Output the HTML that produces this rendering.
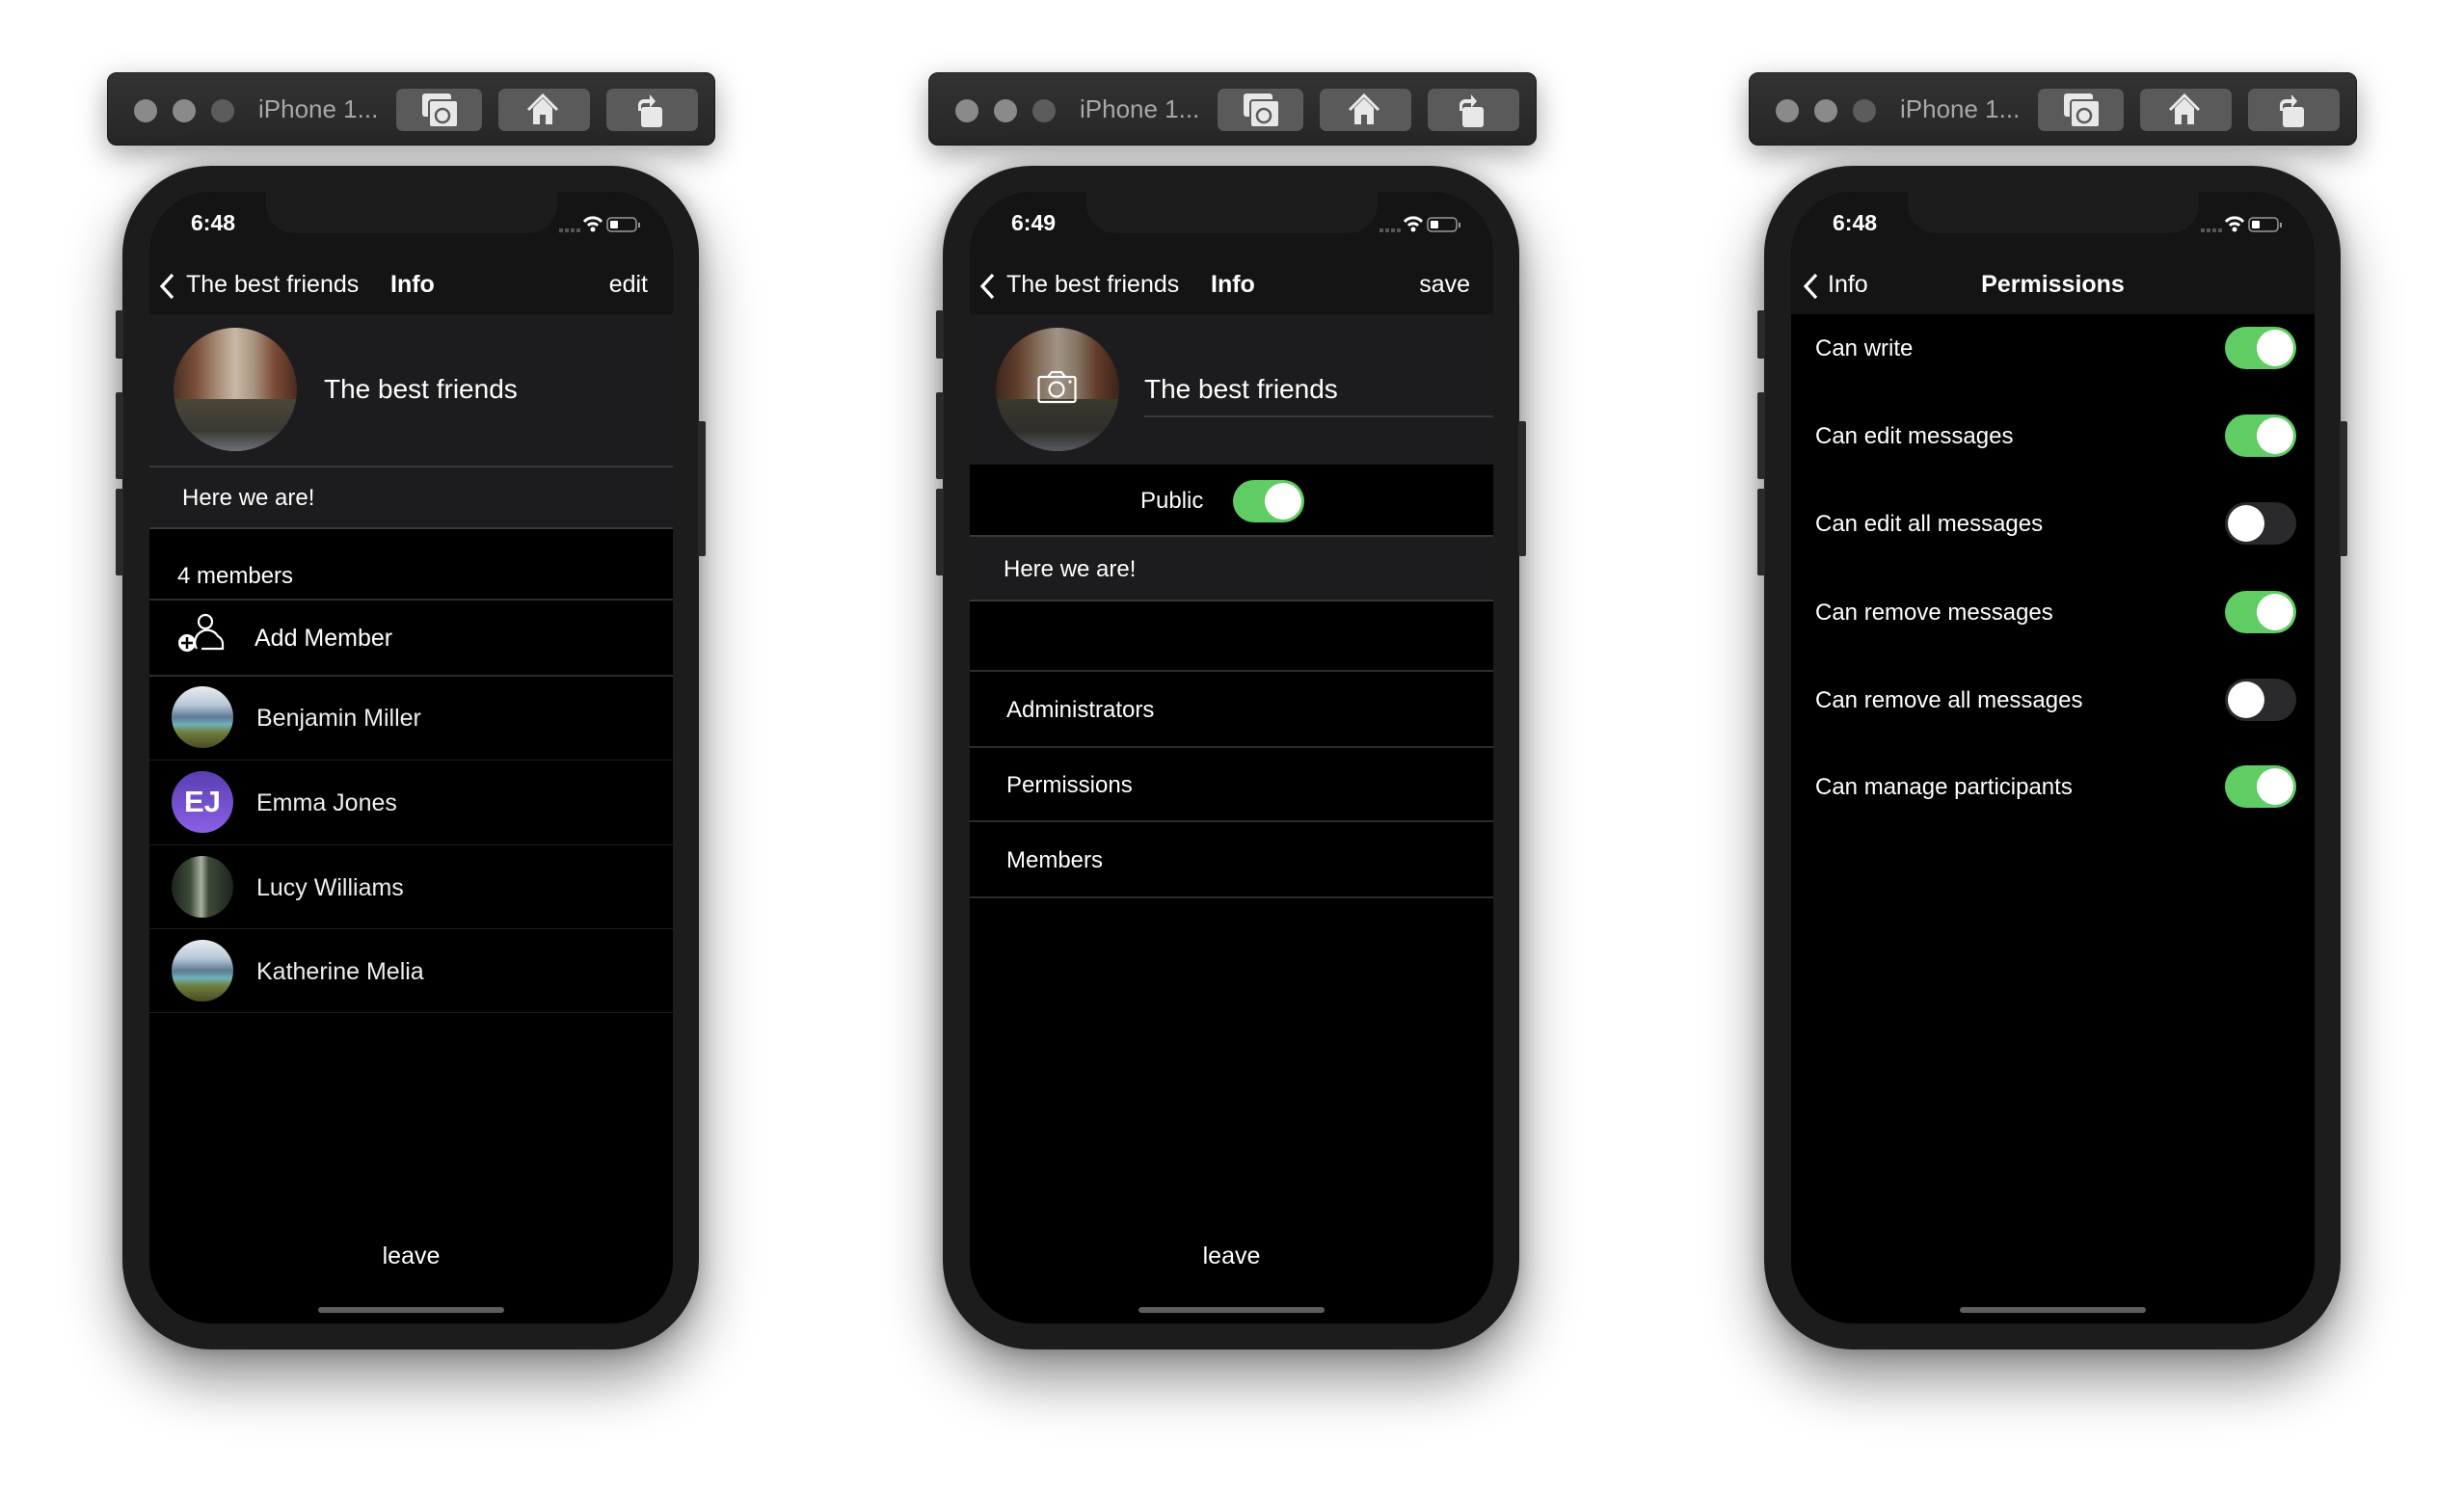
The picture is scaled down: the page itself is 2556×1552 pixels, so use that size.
<!DOCTYPE html>
<html><head><meta charset="utf-8">
<style>
*{margin:0;padding:0;box-sizing:border-box}
body{width:2556px;height:1552px;background:#fff;position:relative;overflow:hidden;font-family:"Liberation Sans",sans-serif;color:#fff}
.a{position:absolute}
.tb{position:absolute;top:75px;width:631px;height:76px;border-radius:10px;background:linear-gradient(#333,#262626);box-shadow:0 10px 30px rgba(0,0,0,.35);border:1px solid #1a1a1a}
.dot{position:absolute;top:27px;width:24px;height:24px;border-radius:50%}
.tbt{position:absolute;left:156px;top:22px;font-size:26px;color:#a8a8a8}
.btn{position:absolute;top:16px;height:44px;border-radius:7px;background:#5a5a5a}
.phone{position:absolute;top:172px;width:598px;height:1228px;border-radius:92px;background:#1c1c1c;box-shadow:0 30px 60px rgba(0,0,0,.45),0 0 20px rgba(0,0,0,.25)}
.side{position:absolute;background:#2a2a2a;width:8px;border-radius:2px}
.scr{position:absolute;left:28px;top:27px;width:543px;height:1174px;border-radius:64px;background:#000;overflow:hidden}
.nav{position:absolute;left:0;top:0;width:543px;height:127px;background:#141414}
.notch{position:absolute;left:121px;top:0;width:302px;height:43px;background:#1c1c1c;border-radius:0 0 30px 30px}
.time{position:absolute;left:43px;top:19px;font-size:23px;font-weight:bold}
.t{position:absolute;white-space:nowrap;line-height:1}
.sep{position:absolute;left:0;width:543px;height:2px;background:#2c2c2e}
.hi{position:absolute;left:175px;top:1157px;width:193px;height:6px;border-radius:3px;background:#5e5e5e}
.tg{position:absolute;width:74px;height:44px;border-radius:22px}
.tg.on{background:#5fcc64}
.tg.off{background:#2a2a2c}
.tg i{position:absolute;top:3px;width:38px;height:38px;border-radius:50%;background:#fff}
.tg.on i{right:3px}.tg.off i{left:3px}
.venice{background:linear-gradient(90deg,#4a3024 0,#7a4e38 18%,#a88a74 35%,#c9b8a6 50%,#a89480 65%,#7a4a34 82%,#4a2c20 100%);}
.venice:after{content:"";position:absolute;left:0;right:0;bottom:0;height:42%;background:linear-gradient(#4a4638,#3a3a34 60%,#6c7078)}
.land{background:linear-gradient(#e9ecef 0,#b8c8d8 30%,#5d7a94 50%,#6fb0b8 62%,#6f7d3c 75%,#4b4a22 100%)}
.forest{background:linear-gradient(90deg,#1e261e,#3c4a38 30%,#a8b0a0 48%,#3c4a38 60%,#1c241c)}
.av{position:absolute;width:64px;height:64px;border-radius:50%;overflow:hidden}
</style></head><body>

<div class="tb" style="left:111px">
<div class="dot" style="left:27px;background:#8a8a8a"></div><div class="dot" style="left:67px;background:#8a8a8a"></div><div class="dot" style="left:107px;background:#5c5c5c"></div>
<div class="tbt">iPhone 1...</div>
<div class="btn" style="left:299px;width:89px"></div><div class="btn" style="left:405px;width:95px"></div><div class="btn" style="left:517px;width:95px"></div>
</div>
<div class="tb" style="left:963px">
<div class="dot" style="left:27px;background:#8a8a8a"></div><div class="dot" style="left:67px;background:#8a8a8a"></div><div class="dot" style="left:107px;background:#5c5c5c"></div>
<div class="tbt">iPhone 1...</div>
<div class="btn" style="left:299px;width:89px"></div><div class="btn" style="left:405px;width:95px"></div><div class="btn" style="left:517px;width:95px"></div>
</div>
<div class="tb" style="left:1814px">
<div class="dot" style="left:27px;background:#8a8a8a"></div><div class="dot" style="left:67px;background:#8a8a8a"></div><div class="dot" style="left:107px;background:#5c5c5c"></div>
<div class="tbt">iPhone 1...</div>
<div class="btn" style="left:299px;width:89px"></div><div class="btn" style="left:405px;width:95px"></div><div class="btn" style="left:517px;width:95px"></div>
</div>
<svg class="a" style="left:0;top:0" width="2556" height="200">
<g id="ic" fill="#e8e8e8">
<rect x="438" y="97" width="30" height="24" rx="3"/><rect x="445" y="104" width="30" height="28" rx="3" stroke="#5a5a5a" stroke-width="2"/><circle cx="459" cy="120" r="7" fill="none" stroke="#5a5a5a" stroke-width="2.5"/>
<path d="M548 114 L563 99 L578 114" fill="none" stroke="#e8e8e8" stroke-width="3"/><path d="M553 112 L563 102 L573 112 V129 H553Z"/><rect x="560" y="119" width="6" height="10" fill="#5a5a5a"/>
<path d="M662 115 v-6 a6 6 0 0 1 6 -6 h6 v-5 l6 7 -6 7 v-5 h-6 a3 3 0 0 0 -3 3 v5z"/><rect x="665" y="111" width="22" height="21" rx="3"/>
</g>
<use href="#ic" x="852"/><use href="#ic" x="1703"/>
</svg>

<div class="phone" style="left:127px">
<div class="side" style="left:-7px;top:150px;height:50px"></div><div class="side" style="left:-7px;top:235px;height:90px"></div><div class="side" style="left:-7px;top:335px;height:90px"></div><div class="side" style="left:597px;top:265px;height:140px"></div>
<div class="scr">
<div class="nav"></div><div class="notch"></div>
<div class="time">6:48</div>
<svg class="a" style="left:420px;top:24px" width="100" height="20"><g fill="#555"><rect x="5" y="14" width="4" height="4"/><rect x="11" y="14" width="4" height="4"/><rect x="17" y="14" width="4" height="4"/><rect x="23" y="14" width="4" height="4"/></g><path d="M31 7 a12 12 0 0 1 18 0" stroke="#fff" stroke-width="3" fill="none"/><path d="M35 11 a7 7 0 0 1 10 0" stroke="#fff" stroke-width="3" fill="none"/><circle cx="40" cy="15" r="2.5" fill="#fff"/><rect x="55" y="3" width="30" height="14" rx="4" fill="none" stroke="#999" stroke-width="1.5"/><rect x="58" y="6" width="8" height="8" rx="1" fill="#fff"/><rect x="87" y="8" width="2" height="5" fill="#999"/></svg>
<svg class="a" style="left:9px;top:84px" width="20" height="28"><path d="M15 2 L4 14 L15 26" stroke="#fff" stroke-width="3.2" fill="none"/></svg>
<div class="t" style="left:38px;top:84px;font-size:25px">The best friends</div>
<div class="t" style="left:250px;top:84px;font-size:25px;font-weight:bold">Info</div>
<div class="t" style="right:26px;top:84px;font-size:25px">edit</div>
<div class="a" style="left:0;top:127px;width:543px;height:157px;background:#1c1c1e"></div>
<div class="a venice" style="left:25px;top:141px;width:128px;height:128px;border-radius:50%;overflow:hidden"></div>
<div class="t" style="left:181px;top:191px;font-size:28px">The best friends</div>
<div class="sep" style="top:284px;background:#38383a"></div>
<div class="a" style="left:0;top:286px;width:543px;height:63px;background:#1c1c1e"></div>
<div class="t" style="left:34px;top:306px;font-size:24px">Here we are!</div>
<div class="sep" style="top:348px;background:#38383a"></div>
<div class="t" style="left:29px;top:387px;font-size:24px">4 members</div>
<div class="sep" style="top:422px"></div>
<svg class="a" style="left:29px;top:436px" width="50" height="50"><circle cx="29" cy="10" r="7" fill="none" stroke="#fff" stroke-width="2.2"/><path d="M20 38 a12 12 0 0 1 22 -13 a9 9 0 0 1 5 8 v5 h-22" fill="none" stroke="#fff" stroke-width="2.2"/><circle cx="10" cy="32" r="9" fill="#fff"/><path d="M10 26 v12 M4 32 h12" stroke="#000" stroke-width="2.5"/></svg>
<div class="t" style="left:109px;top:451px;font-size:25px">Add Member</div>
<div class="sep" style="top:501px"></div>
<div class="av land" style="left:23px;top:513px"></div><div class="t" style="left:111px;top:534px;font-size:25px;color:#eee">Benjamin Miller</div>
<div class="sep" style="top:589px;height:1px;background:#1c1c1c"></div>
<div class="av" style="left:23px;top:601px;background:linear-gradient(#5a3fb0,#8a5fe6);font-weight:bold;font-size:31px;text-align:center;line-height:64px">EJ</div><div class="t" style="left:111px;top:622px;font-size:25px;color:#eee">Emma Jones</div>
<div class="sep" style="top:677px;height:1px;background:#1c1c1c"></div>
<div class="av forest" style="left:23px;top:689px"></div><div class="t" style="left:111px;top:710px;font-size:25px;color:#eee">Lucy Williams</div>
<div class="sep" style="top:764px;height:1px;background:#1c1c1c"></div>
<div class="av land" style="left:23px;top:776px"></div><div class="t" style="left:111px;top:797px;font-size:25px;color:#eee">Katherine Melia</div>
<div class="sep" style="top:851px;height:1px;background:#1c1c1c"></div>
<div class="t" style="left:0;width:543px;text-align:center;top:1092px;font-size:25px">leave</div>
<div class="hi"></div>
</div></div>

<div class="phone" style="left:978px">
<div class="side" style="left:-7px;top:150px;height:50px"></div><div class="side" style="left:-7px;top:235px;height:90px"></div><div class="side" style="left:-7px;top:335px;height:90px"></div><div class="side" style="left:597px;top:265px;height:140px"></div>
<div class="scr">
<div class="nav"></div><div class="notch"></div>
<div class="time">6:49</div>
<svg class="a" style="left:420px;top:24px" width="100" height="20"><g fill="#555"><rect x="5" y="14" width="4" height="4"/><rect x="11" y="14" width="4" height="4"/><rect x="17" y="14" width="4" height="4"/><rect x="23" y="14" width="4" height="4"/></g><path d="M31 7 a12 12 0 0 1 18 0" stroke="#fff" stroke-width="3" fill="none"/><path d="M35 11 a7 7 0 0 1 10 0" stroke="#fff" stroke-width="3" fill="none"/><circle cx="40" cy="15" r="2.5" fill="#fff"/><rect x="55" y="3" width="30" height="14" rx="4" fill="none" stroke="#999" stroke-width="1.5"/><rect x="58" y="6" width="8" height="8" rx="1" fill="#fff"/><rect x="87" y="8" width="2" height="5" fill="#999"/></svg>
<svg class="a" style="left:9px;top:84px" width="20" height="28"><path d="M15 2 L4 14 L15 26" stroke="#fff" stroke-width="3.2" fill="none"/></svg>
<div class="t" style="left:38px;top:84px;font-size:25px">The best friends</div>
<div class="t" style="left:250px;top:84px;font-size:25px;font-weight:bold">Info</div>
<div class="t" style="right:24px;top:84px;font-size:25px">save</div>
<div class="a" style="left:0;top:127px;width:543px;height:156px;background:#1c1c1e"></div>
<div class="a venice" style="left:27px;top:141px;width:128px;height:128px;border-radius:50%;overflow:hidden;filter:brightness(.8)"></div>
<svg class="a" style="left:70px;top:186px" width="42" height="34"><rect x="1.5" y="6" width="38" height="26" rx="2" fill="none" stroke="#fff" stroke-width="2.2"/><path d="M11 6 l4 -5 h10 l4 5" fill="none" stroke="#fff" stroke-width="2.2"/><circle cx="20" cy="19" r="7.5" fill="none" stroke="#fff" stroke-width="2.2"/><circle cx="34" cy="11" r="1.6" fill="#fff"/></svg>
<div class="t" style="left:181px;top:191px;font-size:28px">The best friends</div>
<div class="a" style="left:181px;top:232px;width:362px;height:2px;background:#3a3a3c"></div>
<div class="t" style="left:177px;top:309px;font-size:24px">Public</div>
<div class="tg on" style="left:273px;top:299px"><i></i></div>
<div class="sep" style="top:356px;background:#38383a"></div>
<div class="a" style="left:0;top:358px;width:543px;height:66px;background:#1c1c1e"></div>
<div class="t" style="left:35px;top:380px;font-size:24px">Here we are!</div>
<div class="sep" style="top:423px;background:#38383a"></div>
<div class="sep" style="top:496px"></div>
<div class="t" style="left:38px;top:526px;font-size:24px">Administrators</div>
<div class="sep" style="top:575px"></div>
<div class="t" style="left:38px;top:604px;font-size:24px">Permissions</div>
<div class="sep" style="top:652px"></div>
<div class="t" style="left:38px;top:682px;font-size:24px">Members</div>
<div class="sep" style="top:731px"></div>
<div class="t" style="left:0;width:543px;text-align:center;top:1092px;font-size:25px">leave</div>
<div class="hi"></div>
</div></div>

<div class="phone" style="left:1830px">
<div class="side" style="left:-7px;top:150px;height:50px"></div><div class="side" style="left:-7px;top:235px;height:90px"></div><div class="side" style="left:-7px;top:335px;height:90px"></div><div class="side" style="left:597px;top:265px;height:140px"></div>
<div class="scr">
<div class="nav"></div><div class="notch"></div>
<div class="time">6:48</div>
<svg class="a" style="left:420px;top:24px" width="100" height="20"><g fill="#555"><rect x="5" y="14" width="4" height="4"/><rect x="11" y="14" width="4" height="4"/><rect x="17" y="14" width="4" height="4"/><rect x="23" y="14" width="4" height="4"/></g><path d="M31 7 a12 12 0 0 1 18 0" stroke="#fff" stroke-width="3" fill="none"/><path d="M35 11 a7 7 0 0 1 10 0" stroke="#fff" stroke-width="3" fill="none"/><circle cx="40" cy="15" r="2.5" fill="#fff"/><rect x="55" y="3" width="30" height="14" rx="4" fill="none" stroke="#999" stroke-width="1.5"/><rect x="58" y="6" width="8" height="8" rx="1" fill="#fff"/><rect x="87" y="8" width="2" height="5" fill="#999"/></svg>
<svg class="a" style="left:11px;top:84px" width="20" height="28"><path d="M15 2 L4 14 L15 26" stroke="#fff" stroke-width="3.2" fill="none"/></svg>
<div class="t" style="left:38px;top:84px;font-size:25px">Info</div>
<div class="t" style="left:0;width:543px;text-align:center;top:84px;font-size:25px;font-weight:bold">Permissions</div>
<div class="t" style="left:25px;top:151px;font-size:24px">Can write</div><div class="tg on" style="left:450px;top:140px"><i></i></div>
<div class="t" style="left:25px;top:242px;font-size:24px">Can edit messages</div><div class="tg on" style="left:450px;top:231px"><i></i></div>
<div class="t" style="left:25px;top:333px;font-size:24px">Can edit all messages</div><div class="tg off" style="left:450px;top:322px"><i></i></div>
<div class="t" style="left:25px;top:425px;font-size:24px">Can remove messages</div><div class="tg on" style="left:450px;top:414px"><i></i></div>
<div class="t" style="left:25px;top:516px;font-size:24px">Can remove all messages</div><div class="tg off" style="left:450px;top:505px"><i></i></div>
<div class="t" style="left:25px;top:606px;font-size:24px">Can manage participants</div><div class="tg on" style="left:450px;top:595px"><i></i></div>
<div class="hi"></div>
</div></div>
</body></html>
